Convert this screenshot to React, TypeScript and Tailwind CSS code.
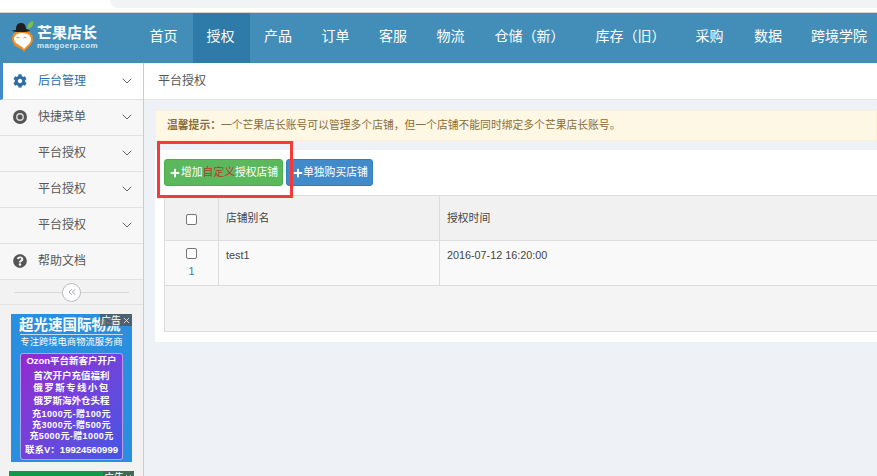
import { ChevronDown, ChevronsLeft, X } from 'lucide-react'
import { FaCog, FaPlus, FaQuestionCircle } from 'react-icons/fa'

const navItems = [
  { label: '首页', w: 'w-[57px]' },
  { label: '授权', w: 'w-[57px]', active: true },
  { label: '产品', w: 'w-[58px]' },
  { label: '订单', w: 'w-[57px]' },
  { label: '客服', w: 'w-[58px]' },
  { label: '物流', w: 'w-[57px]' },
  { label: '仓储（新）', w: 'w-[101px]' },
  { label: '库存（旧）', w: 'w-[101px]' },
  { label: '采购', w: 'w-[57px]' },
  { label: '数据', w: 'w-[60px]' },
  { label: '跨境学院', w: 'w-[82px]' },
]

function SideRow({
  label,
  icon,
  active,
  chevron = true,
}: {
  label: string
  icon?: React.ReactNode
  active?: boolean
  chevron?: boolean
}) {
  return (
    <div
      className={`flex items-center border-b border-[#e2e2e2] pr-[8px] text-[12px] ${
        active
          ? 'h-[37px] border-l-[3px] border-l-[#428bca] bg-white pl-[10px] text-[#2f6ea5]'
          : 'h-[36px] bg-[#f7f7f7] pb-[1px] pl-[13px] text-[#585858]'
      }`}
    >
      <span className="flex w-[25px] shrink-0 items-center">{icon}</span>
      <span className="flex-1">{label}</span>
      {chevron && <ChevronDown className="h-[16px] w-[16px] text-[#555]" strokeWidth={1.4} />}
    </div>
  )
}

function Ad() {
  return (
    <div className="relative ml-[11px] h-[148px] w-[121px] bg-[#2a8fe0] px-[9px] pt-[3px] text-center font-bold text-white">
      <div className="absolute right-0 top-0 flex h-[12px] items-center gap-[1px] bg-[#555]/80 px-[1px] text-[10px] font-normal text-white">
        广告
        <X className="h-[9px] w-[9px]" />
      </div>
      <div className="-mr-[7px] -ml-[1px] text-left text-[14.5px] leading-[16px] whitespace-nowrap">超光速国际物流</div>
      <div className="mt-[1px] border-t border-white/70 pt-[1px] leading-[12px]">
        <div className="-mx-[3px] text-[9.3px] font-normal whitespace-nowrap">专注跨境电商物流服务商</div>
      </div>
      <div className="mt-[5px] h-[107px] rounded-[3px] border border-white/50 bg-gradient-to-br from-[#9326d0] to-[#3f55e6] pt-[1px]">
        <div className="text-[9.5px] leading-[12px] whitespace-nowrap">Ozon平台新客户开户</div>
        <div className="mt-[3px] text-[9.5px] leading-[12px] whitespace-nowrap">首次开户充值福利</div>
        <div className="text-[9.5px] leading-[12px] tracking-[1.4px] whitespace-nowrap">俄罗斯专线小包</div>
        <div className="mt-[1px] text-[9.5px] leading-[12px] whitespace-nowrap">俄罗斯海外仓头程</div>
        <div className="mt-[2px] text-[9px] leading-[11px] tracking-[0.4px] whitespace-nowrap">充1000元-赠100元</div>
        <div className="text-[9px] leading-[11px] tracking-[0.4px] whitespace-nowrap">充3000元-赠500元</div>
        <div className="text-[9px] leading-[11px] tracking-[0.4px] whitespace-nowrap">充5000元-赠1000元</div>
        <div className="mt-[2px] text-[9.5px] leading-[12px] whitespace-nowrap">联系V：19924560999</div>
      </div>
    </div>
  )
}

export default function App() {
  return (
    <div
      className="flex h-[476px] w-[877px] flex-col overflow-hidden bg-[#eef1f6] text-[10.8px]"
      style={{ fontFamily: '"Liberation Sans", "Noto Sans CJK SC", sans-serif' }}
    >
      {/* browser chrome remnant */}
      <div className="flex h-[13px] shrink-0 border-b border-[#d5d5d5] bg-white">
        <div className="ml-[110px] h-[8px] flex-1 rounded-bl-[10px] bg-[#f1f3f4]" />
      </div>

      <header className="flex h-[50px] shrink-0 bg-[#438eb9] text-white">
        <div className="flex w-[136px] shrink-0 items-center pb-[3px] pl-[11px]">
          <svg viewBox="0 0 24 31" className="h-[31px] w-[24px] shrink-0">
            <path d="M1 18C1 12 6 9 11 9c6 0 11 3 11 9 0 6-6 8-9 13-2-4-7-4-10-7-1-2-2-4-2-6z" fill="#ee8a1f" />
            <path d="M3 18c0-4 4-6 8-6 5 0 9 2 9 6 0 5-5 7-7 10-2-3-6-4-8-6-1-1-2-3-2-4z" fill="#fff" />
            <path d="M5.500 17q1.500-2 3 0M12.500 17q1.500-2 3 0" fill="none" stroke="#ee8a1f" strokeWidth="1" />
            <path d="M5 9c0-4 1-7 5-7 3 0 5 2 5 6 2 0 3 1 4 2-3 1-6 1-9 1-3 0-6 0-9-1 1-1 2-1 4-1z" fill="#1f1f1f" />
            <path d="M16 8c0-4 2-7 6-8 1 4-1 7-6 8z" fill="#7cc04b" />
          </svg>
          <div className="ml-[2px] flex flex-col">
            <span className="text-[15px] font-bold leading-[17px] text-white">芒果店长</span>
            <span className="text-[8px] font-bold leading-[9px] tracking-[0.3px] text-[#d7e6f0]">mangoerp.com</span>
          </div>
        </div>
        <nav className="flex min-w-0 flex-1">
          {navItems.map((item) => (
            <div
              key={item.label}
              className={`flex shrink-0 items-center justify-center pb-[4px] pr-[2px] text-[14px] whitespace-nowrap ${item.w} ${
                item.active ? 'bg-[#2e7aa8]' : ''
              }`}
            >
              {item.label}
            </div>
          ))}
        </nav>
      </header>

      <div className="flex min-h-0 flex-1">
        <aside className="w-[144px] shrink-0 overflow-hidden border-r border-[#cccccc] bg-[#f2f2f2]">
          <SideRow label="后台管理" active icon={<FaCog className="h-[14px] w-[14px] text-[#2f6ea5]" />} />
          <SideRow
            label="快捷菜单"
            icon={
              <svg viewBox="0 0 14 14" className="h-[14px] w-[14px]">
                <circle cx="7" cy="7" r="7" fill="#555" />
                <circle cx="7" cy="7" r="3.200" fill="none" stroke="#ddd" strokeWidth="1.400" />
              </svg>
            }
          />
          <SideRow label="平台授权" />
          <SideRow label="平台授权" />
          <SideRow label="平台授权" />
          <SideRow label="帮助文档" chevron={false} icon={<FaQuestionCircle className="h-[14px] w-[14px] text-[#555]" />} />
          <div className="flex h-[25px] items-center border-b border-[#e2e2e2] px-[14px]">
            <div className="h-px flex-1 bg-[#d8d8d8]" />
            <div className="flex h-[19px] w-[19px] items-center justify-center rounded-full border border-[#bbb] bg-white">
              <ChevronsLeft className="h-[12px] w-[12px] text-[#99a]" />
            </div>
            <div className="h-px flex-1 bg-[#d8d8d8]" />
          </div>
          <div className="pt-[9px]">
            <Ad />
            <div className="relative ml-[9px] mt-[9px] h-[20px] w-[125px] bg-[#0f9a4a]">
              <div className="absolute right-0 top-0 flex h-[12px] items-center bg-[#555]/70 px-[1px] text-[10px] text-white">
                广告
                <X className="h-[9px] w-[9px]" />
              </div>
            </div>
          </div>
        </aside>

        <main className="min-w-0 flex-1">
          <div className="flex h-[37px] items-center border-b border-[#e2e2e2] bg-white pl-[14px] text-[12px] text-[#555]">
            平台授权
          </div>
          <div className="pl-[11px] pt-[10px]">
            <div className="flex h-[31px] items-center border border-[#faf0d8] bg-[#fdf7e4] pl-[11px] whitespace-nowrap text-[#8a6d3b]">
              <strong className="font-bold">温馨提示：</strong>
              <span>一个芒果店长账号可以管理多个店铺，但一个店铺不能同时绑定多个芒果店长账号。</span>
            </div>
            <div className="relative mt-[9px] h-[192px] bg-white pl-[9px] pt-[9px]">
              <div className="flex gap-[3px]">
                <button className="flex h-[27px] w-[119px] items-center rounded-[3px] border border-[#4cae4c] bg-[#5cb85c] pl-[5px] whitespace-nowrap text-white">
                  <FaPlus className="h-[10px] w-[10px]" />
                  <span className="ml-[1px]">增加<span className="text-[#b8392f]">自定义</span>授权店铺</span>
                </button>
                <button className="flex h-[27px] w-[87px] items-center rounded-[3px] border border-[#357ebd] bg-[#428bca] pl-[6px] whitespace-nowrap text-white">
                  <FaPlus className="h-[10px] w-[10px]" />
                  <span>单独购买店铺</span>
                </button>
              </div>
              <table className="mt-[9px] w-[800px] table-fixed border-collapse border border-[#dddddd] text-[#444]">
                <colgroup>
                  <col className="w-[54px]" />
                  <col className="w-[221px]" />
                  <col />
                </colgroup>
                <thead>
                  <tr className="h-[45px] bg-[#f1f1f1]">
                    <th className="border border-[#dddddd] text-center font-normal">
                      <span className="inline-block h-[11px] w-[11px] rounded-[2px] border border-[#767676] bg-white align-middle" />
                    </th>
                    <th className="border border-[#dddddd] pl-[7px] text-left font-normal">店铺别名</th>
                    <th className="border border-[#dddddd] pl-[7px] text-left font-normal">授权时间</th>
                  </tr>
                </thead>
                <tbody>
                  <tr className="h-[45px] bg-[#f9f9f9] align-top">
                    <td className="border border-[#dddddd] pt-[7px] text-center leading-[14px]">
                      <span className="inline-block h-[11px] w-[11px] rounded-[2px] border border-[#767676] bg-white align-top" />
                      <div className="mt-[2px] text-[#337ab7]">1</div>
                    </td>
                    <td className="border border-[#dddddd] pl-[7px] pt-[7px] leading-[14px]">test1</td>
                    <td className="border border-[#dddddd] pl-[7px] pt-[7px] leading-[14px]">2016-07-12 16:20:00</td>
                  </tr>
                  <tr className="h-[46px] bg-[#f4f4f4]">
                    <td colSpan={3} />
                  </tr>
                </tbody>
              </table>
              {/* red annotation box */}
              <div className="absolute left-[2px] top-[-9px] h-[57px] w-[136px] border-[3px] border-[#f53a3a]" />
            </div>
          </div>
        </main>
      </div>
    </div>
  )
}
